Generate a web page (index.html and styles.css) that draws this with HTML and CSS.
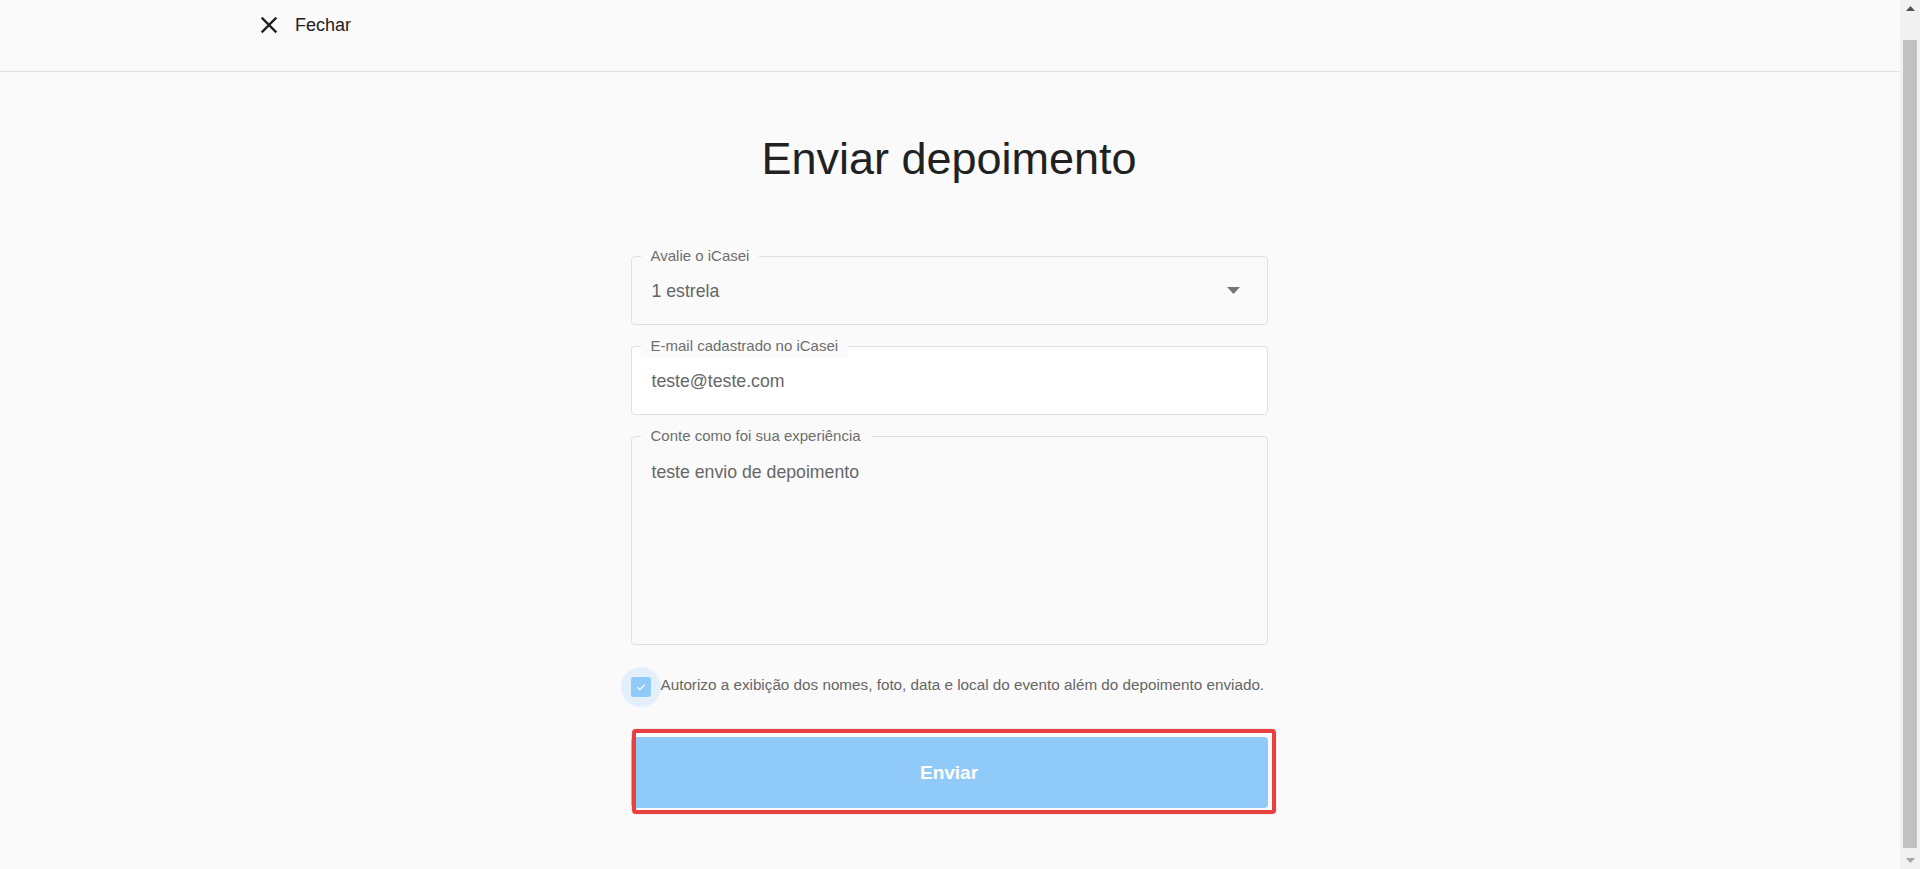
FILE: index.html
```html
<!DOCTYPE html>
<html lang="pt-BR">
<head>
<meta charset="utf-8">
<title>Enviar depoimento</title>
<link rel="stylesheet" href="styles.css">
</head>
<body>
<div class="app">
  <div class="viewport">
    <header class="topbar">
      <div class="topbar-inner">
        <button class="close-btn" type="button">
          <svg class="close-icon" viewBox="0 0 24 24" width="28" height="28" aria-hidden="true"><path d="M19 6.41 17.59 5 12 10.59 6.41 5 5 6.41 10.59 12 5 17.59 6.41 19 12 13.41 17.59 19 19 17.59 13.41 12z"/></svg>
          <span class="close-text">Fechar</span>
        </button>
      </div>
    </header>
    <main class="page">
      <h1 class="title">Enviar depoimento</h1>
      <form class="form">
        <div class="field">
          <span class="field-label">Avalie o iCasei</span>
          <span class="field-value">1 estrela</span>
          <svg class="dropdown-arrow" viewBox="0 0 13 7" width="13" height="7" aria-hidden="true"><path d="M0 0h13L6.5 7z"/></svg>
        </div>
        <div class="field field-white">
          <span class="field-label">E-mail cadastrado no iCasei</span>
          <span class="field-value">teste@teste.com</span>
        </div>
        <div class="field field-area">
          <span class="field-label">Conte como foi sua experiência</span>
          <span class="field-value">teste envio de depoimento</span>
        </div>
        <label class="consent">
          <span class="check-halo">
            <span class="check-box">
              <svg viewBox="0 0 12 12" width="12" height="12" aria-hidden="true"><path d="M2.3 6.2 4.9 8.6 9.8 3.6" fill="none" stroke="#ffffff" stroke-width="1.2"/></svg>
            </span>
          </span>
          <span class="consent-text">Autorizo a exibição dos nomes, foto, data e local do evento além do depoimento enviado.</span>
        </label>
        <div class="submit-wrap">
          <button class="submit" type="button">Enviar</button>
          <span class="highlight"></span>
        </div>
      </form>
    </main>
  </div>
  <div class="scrollbar" aria-hidden="true">
    <div class="sb-btn">
      <svg viewBox="0 0 9 5" width="9" height="5"><path d="M0 5h9L4.5 0z" fill="#505050"/></svg>
    </div>
    <div class="sb-track"><div class="sb-thumb"></div></div>
    <div class="sb-btn">
      <svg viewBox="0 0 9 5" width="9" height="5"><path d="M0 0h9L4.5 5z" fill="#a3a3a3"/></svg>
    </div>
  </div>
</div>
</body>
</html>
```
FILE: styles.css
```css
* { box-sizing: border-box; }

html, body {
  margin: 0;
  background: #fafafa;
}

body {
  font-family: "Liberation Sans", Arial, Helvetica, sans-serif;
  color: #212121;
  overflow: hidden;
}

.app {
  display: flex;
  height: 100vh;
}

.viewport {
  flex: 1;
  min-width: 0;
  overflow: hidden;
}

/* classic scrollbar look */
.scrollbar {
  width: 20px;
  flex: none;
  background: #f1f1f1;
  display: flex;
  flex-direction: column;
}

.sb-btn {
  height: 17px;
  display: flex;
  align-items: center;
  justify-content: center;
}

.sb-btn svg { display: block; }

.sb-track {
  flex: 1;
  display: flex;
  padding: 23px 3px 4px;
}

.sb-thumb {
  flex: 1;
  background: #c1c1c1;
}

.topbar {
  height: 72px;
  border-bottom: 1px solid #e0e0e0;
  background: #fafafa;
}

.topbar-inner {
  max-width: 1390px;
  margin: 0 auto;
  height: 50px;
  display: flex;
  align-items: center;
}

.close-btn {
  display: flex;
  align-items: center;
  gap: 12px;
  background: none;
  border: 0;
  padding: 0;
  margin: 0;
  font: inherit;
  color: #212121;
  cursor: pointer;
}

.close-icon { fill: #212121; display: block; }

.close-text {
  font-size: 18px;
  line-height: 22px;
}

.page {
  width: 637px;
  margin: 0 auto;
  padding: 61px 0 40px;
  transform: translateX(-1px);
}

.title {
  margin: 0;
  text-align: center;
  font-size: 45px;
  line-height: 52px;
  font-weight: 400;
  color: #212121;
}

.form {
  margin-top: 71px;
  display: flex;
  flex-direction: column;
}

.field {
  position: relative;
  height: 69px;
  border: 1px solid #e0e0e0;
  border-radius: 4px;
  display: flex;
  align-items: center;
  padding: 0 27px 0 20px;
  margin-bottom: 21px;
}

.field-white { background: #ffffff; }

.field-area {
  height: 209px;
  align-items: flex-start;
  padding-top: 25px;
  margin-bottom: 22px;
}

.field-label {
  position: absolute;
  top: -12px;
  left: 9px;
  padding: 0 10px;
  background: #fafafa;
  font-size: 15px;
  line-height: 22px;
  color: #6e6e6e;
}

.field-value {
  flex: 1;
  font-size: 17.7px;
  line-height: 20px;
  color: #666666;
}

.dropdown-arrow { fill: #757575; display: block; }

.consent {
  display: flex;
  align-items: center;
  margin-left: -10px;
}

.check-halo {
  width: 40px;
  height: 40px;
  border-radius: 50%;
  background: #e3f0fb;
  display: flex;
  align-items: center;
  justify-content: center;
  flex: none;
}

.check-box {
  width: 20px;
  height: 20px;
  border-radius: 3px;
  background: #90caf9;
  display: flex;
  align-items: center;
  justify-content: center;
}

.check-box svg { display: block; }

.consent-text {
  margin-left: 0;
  margin-top: -5px;
  font-size: 15.25px;
  line-height: 18px;
  color: #666666;
}

.submit-wrap {
  position: relative;
  margin-top: 30px;
}

.submit {
  display: block;
  width: 100%;
  height: 71px;
  border: 0;
  border-radius: 4px;
  background: #90caf9;
  color: #ffffff;
  font-family: inherit;
  font-size: 19px;
  font-weight: 700;
  cursor: pointer;
}

.highlight {
  position: absolute;
  left: 1px;
  top: -8px;
  width: 644px;
  height: 85px;
  border: 4px solid #e8403f;
  border-radius: 4px;
  box-shadow: 0 0 1px rgba(0, 0, 0, 0.5);
  pointer-events: none;
}
```
